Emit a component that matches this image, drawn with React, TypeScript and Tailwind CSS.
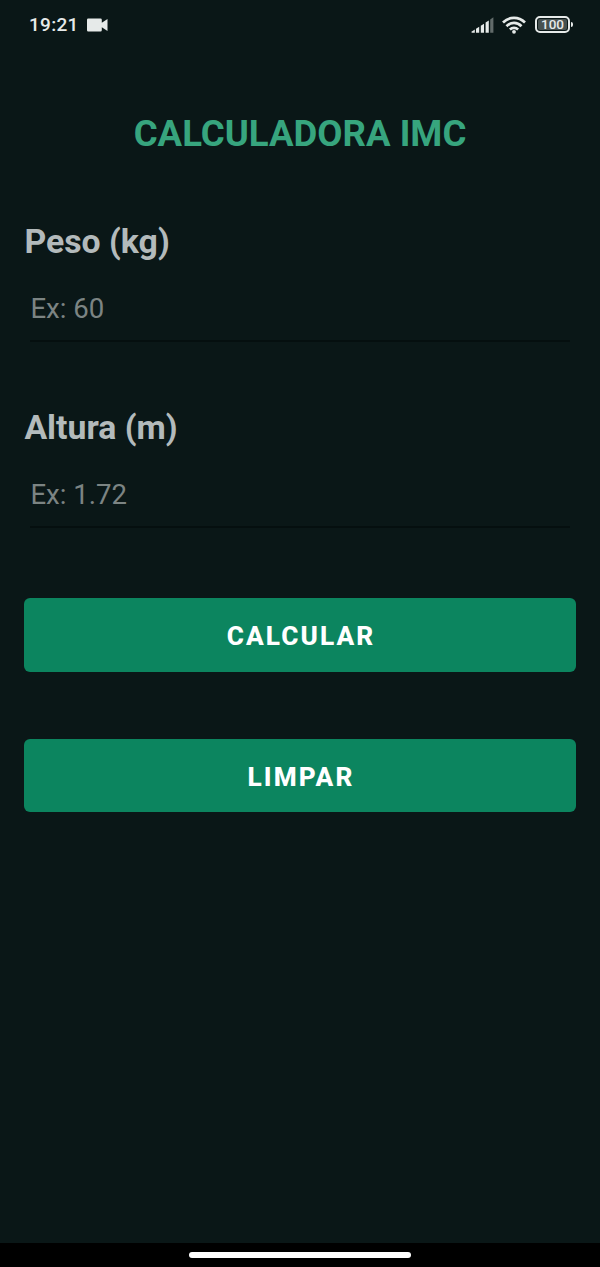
import { useState } from "react";

function StatusBar() {
  return (
    <header className="flex h-[50px] items-center justify-between pr-[27px] pl-[29px] text-[#e6eae9]">
      <div className="flex items-center gap-[8px]">
        <span className="text-[19px] leading-[22px] font-medium tracking-[0.3px]">19:21</span>
        <svg width="21" height="14" viewBox="0 0 21 14" fill="currentColor" aria-hidden="true">
          <path d="M1.2 0.5H13.5Q14.8 0.5 14.8 1.8V4.8L20.5 1V13L14.8 9.2V12.2Q14.8 13.5 13.5 13.5H1.2Q0 13.5 0 12.2V1.8Q0 0.5 1.2 0.5Z" />
        </svg>
      </div>
      <div className="flex items-center">
        <svg width="23" height="17" viewBox="0 0 23 17" fill="currentColor" aria-hidden="true">
          <path d="M0.4 14.8L3.8 12.6V15.8H1.2Q0.2 15.6 0.4 14.8Z" />
          <path d="M5 11.8L8.2 9.8V15.8H5Z" />
          <path d="M9.8 8.8L13 6.8V15.8H9.8Z" />
          <path d="M14.6 5.6L17.8 3.4V15.8H14.6Z" />
          <path d="M19.2 2.5L22.4 0.3V15.8H19.2Z" opacity="0.4" />
        </svg>
        <svg className="ml-[8px]" width="24" height="18" viewBox="0 0 24 18" fill="none" stroke="currentColor" strokeWidth="2.7" aria-hidden="true">
          <path d="M1 6.5Q5.8 1.8 12 1.8T23 6.5" />
          <path d="M4.5 10.2Q7.8 6.9 12 6.9T19.5 10.2" />
          <path d="M7.9 13.5Q9.7 11.8 12 11.8T16.1 13.5" />
          <circle cx="12" cy="15.8" r="1.9" fill="currentColor" stroke="none" />
        </svg>
        <div className="-mt-px ml-[9px] flex h-[17px] w-[35px] items-center justify-center rounded-[5px] border-2 border-[#e6eae9] p-px">
          <span className="flex h-full w-full items-center justify-center rounded-[2px] bg-[#465150] pt-px text-[13.5px] leading-none font-medium">100</span>
        </div>
        <span className="-mt-px ml-px h-[5px] w-[2px] rounded-r-sm bg-[#e6eae9]" />
      </div>
    </header>
  );
}

type FieldProps = {
  label: string;
  placeholder: string;
  value: string;
  onChange: (value: string) => void;
};

function Field({ label, placeholder, value, onChange }: FieldProps) {
  return (
    <label className="flex h-[186px] flex-col">
      <span className="h-[40px] text-[33.8px] leading-[40px] font-bold text-[#b3babb]">{label}</span>
      <span className="mx-[6px] mt-[26px] flex h-[54px] border-b-2 border-[#050f0f]">
        <input
          className="h-[42px] w-full bg-transparent text-[27.6px] leading-[42px] text-[#b3babb] outline-none placeholder:text-[#7c8483]"
          inputMode="decimal"
          placeholder={placeholder}
          value={value}
          onChange={(event) => onChange(event.target.value)}
        />
      </span>
    </label>
  );
}

function ActionButton({ children, onClick }: { children: string; onClick?: () => void }) {
  return (
    <button
      type="button"
      onClick={onClick}
      className="h-[73.6px] w-full rounded-[6px] bg-[#0c855f] pt-[3px] pl-[2px] text-[26.2px] leading-[32px] font-extrabold tracking-[2.1px] text-white"
    >
      {children}
    </button>
  );
}

export default function App() {
  const [weight, setWeight] = useState("");
  const [height, setHeight] = useState("");

  const clear = () => {
    setWeight("");
    setHeight("");
  };

  return (
    <div className="flex h-[1267px] w-[600px] flex-col overflow-hidden bg-[#0a1717] font-['Roboto',sans-serif]">
      <StatusBar />
      <main className="flex flex-1 flex-col px-[24.4px] pt-[62px]">
        <h1 className="text-center text-[36.6px] leading-[44px] font-bold text-[#37a57e]">CALCULADORA IMC</h1>
        <form className="mt-[66px] flex flex-col" onSubmit={(event) => event.preventDefault()}>
          <Field label="Peso (kg)" placeholder="Ex: 60" value={weight} onChange={setWeight} />
          <Field label="Altura (m)" placeholder="Ex: 1.72" value={height} onChange={setHeight} />
          <div className="mt-[4px] flex flex-col gap-[67px]">
            <ActionButton>CALCULAR</ActionButton>
            <ActionButton onClick={clear}>LIMPAR</ActionButton>
          </div>
        </form>
      </main>
      <footer className="flex h-[24px] justify-center bg-black pt-[9px]">
        <span className="h-[6px] w-[222px] rounded-full bg-white" />
      </footer>
    </div>
  );
}
